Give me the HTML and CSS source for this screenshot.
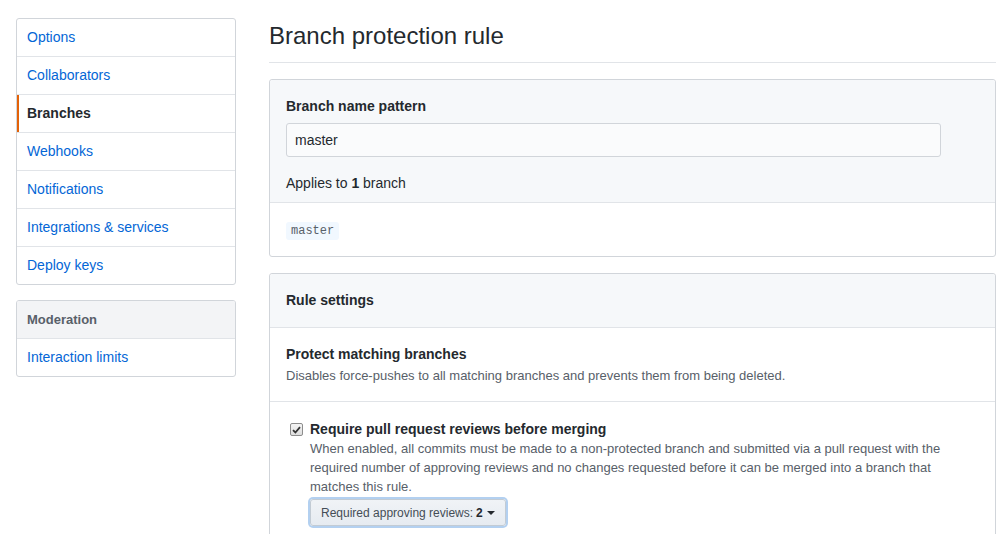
FILE: index.html
```html
<!DOCTYPE html>
<html>
<head>
<meta charset="utf-8">
<link rel="stylesheet" href="styles.css">
</head>
<body>
<div class="page">
  <nav class="sidebar">
    <ul class="menu">
      <li><a class="menu-item" href="#">Options</a></li>
      <li><a class="menu-item" href="#">Collaborators</a></li>
      <li><a class="menu-item selected" href="#">Branches</a></li>
      <li><a class="menu-item" href="#">Webhooks</a></li>
      <li><a class="menu-item" href="#">Notifications</a></li>
      <li><a class="menu-item" href="#">Integrations &amp; services</a></li>
      <li><a class="menu-item" href="#">Deploy keys</a></li>
    </ul>
    <ul class="menu">
      <li class="menu-heading">Moderation</li>
      <li><a class="menu-item" href="#">Interaction limits</a></li>
    </ul>
  </nav>
  <main class="main">
    <h2 class="title">Branch protection rule</h2>
    <div class="box">
      <div class="box-header">
        <div class="label">Branch name pattern</div>
        <div class="input">master</div>
        <div class="applies">Applies to <strong>1</strong> branch</div>
      </div>
      <div class="box-body">
        <code class="branch-tag">master</code>
      </div>
    </div>
    <div class="box">
      <div class="box-header simple">
        <div class="label">Rule settings</div>
      </div>
      <div class="box-row">
        <div class="label">Protect matching branches</div>
        <p class="note">Disables force-pushes to all matching branches and prevents them from being deleted.</p>
      </div>
      <div class="box-row check-row">
        <span class="checkbox"><svg width="9" height="8" viewBox="0 0 9 8"><path d="M1 4.2 L3.4 6.5 L8 1.2" fill="none" stroke="#333" stroke-width="1.8"/></svg></span>
        <div class="check-content">
          <div class="label">Require pull request reviews before merging</div>
          <p class="note">When enabled, all commits must be made to a non-protected branch and submitted via a pull request with the required number of approving reviews and no changes requested before it can be merged into a branch that matches this rule.</p>
          <span class="btn">Required approving reviews: <strong>2</strong><span class="caret"></span></span>
        </div>
      </div>
    </div>
  </main>
</div>
</body>
</html>
```
FILE: styles.css
```css
* { box-sizing: border-box; }
html, body { margin: 0; padding: 0; background: #fff; }
body {
  font-family: "Liberation Sans", Arial, sans-serif;
  font-size: 14px;
  color: #24292e;
  overflow: hidden;
}
.page {
  display: flex;
  padding: 18px 12px 0 16px;
  gap: 33px;
}
.sidebar { width: 220px; flex: none; }
.menu {
  list-style: none;
  margin: 0 0 15px 0;
  padding: 0;
  border: 1px solid #d1d5da;
  border-radius: 3px;
  overflow: hidden;
}
.menu li + li { border-top: 1px solid #e1e4e8; }
.menu-item {
  display: block;
  padding: 0 10px;
  height: 37px;
  line-height: 37px;
  color: #0366d6;
  text-decoration: none;
}
.menu-item.selected {
  font-weight: bold;
  color: #24292e;
  border-left: 2px solid #e36209;
  padding-left: 8px;
}
.menu-heading {
  background: #f3f4f6;
  height: 37px;
  line-height: 37px;
  padding: 0 10px;
  font-size: 13px;
  font-weight: bold;
  color: #586069;
}
.main { flex: 1; min-width: 0; }
.title {
  margin: 0 0 16px 0;
  font-size: 24px;
  font-weight: normal;
  line-height: 36px;
  padding-bottom: 8px;
  border-bottom: 1px solid #e1e4e8;
  height: 45px;
}
.box {
  border: 1px solid #d1d5da;
  border-radius: 3px;
  margin-bottom: 16px;
}
.box-header {
  background: #f6f8fa;
  padding: 16px 16px 9px 16px;
  border-bottom: 1px solid #e1e4e8;
  border-radius: 3px 3px 0 0;
}
.box-header.simple { padding: 16px 16px 17px; }
.label {
  font-weight: bold;
  line-height: 20px;
}
.input {
  margin-top: 7px;
  width: 655px;
  height: 34px;
  line-height: 32px;
  padding: 0 8px;
  background: #fafbfc;
  border: 1px solid #d1d5da;
  border-radius: 3px;
  font-size: 14px;
}
.applies {
  margin-top: 16px;
  line-height: 20px;
}
.box-body { padding: 19px 16px 16px; }
.branch-tag {
  display: block;
  width: max-content;
  font-family: "Liberation Mono", "Courier New", monospace;
  font-size: 12px;
  line-height: 18px;
  padding: 0 5px;
  background: #f1f8ff;
  color: #586069;
  border-radius: 3px;
}
.box-row {
  padding: 16px;
  border-top: 1px solid #e1e4e8;
}
.box-header + .box-row { border-top: none; }
.note {
  margin: 2px 0 0 0;
  font-size: 13px;
  line-height: 19px;
  color: #586069;
}
.check-row {
  display: flex;
  align-items: flex-start;
  padding: 17px 16px 16px 20px;
}
.checkbox {
  flex: none;
  width: 13px;
  height: 13px;
  margin-top: 4px;
  margin-right: 7px;
  border: 1px solid #8d8d8d;
  border-radius: 2px;
  background: linear-gradient(#f4f4f4, #dedede);
  display: flex;
  align-items: center;
  justify-content: center;
}
.check-content .note { margin-top: 0; }
.btn {
  display: inline-flex;
  align-items: center;
  margin-top: 3px;
  height: 27px;
  padding: 0 10px;
  font-size: 12px;
  color: #444d56;
  background: linear-gradient(#f0f3f6, #e6ebf1);
  border: 1px solid #c2cbd4;
  border-radius: 3px;
  box-shadow: 0 0 0 2px #b3d0f0;
}
.btn strong { color: #24292e; margin-left: 3px; }
.caret {
  display: inline-block;
  margin-left: 4px;
  border-top: 4px solid #24292e;
  border-left: 4px solid transparent;
  border-right: 4px solid transparent;
}
```
